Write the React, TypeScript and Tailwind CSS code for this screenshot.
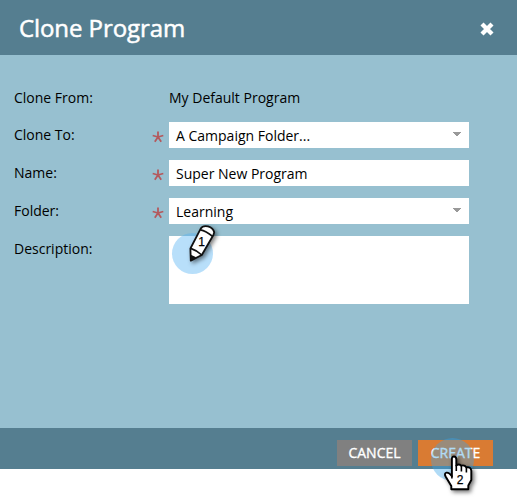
import type { ReactNode } from "react";

function Label({ children }: { children: ReactNode }) {
  return <div className="w-[137px] shrink-0 pt-[3px] leading-5">{children}</div>;
}

function Required() {
  return (
    <svg className="mt-[9px] mr-[5px] ml-px h-3 w-3 shrink-0" viewBox="0 0 12 12" aria-hidden="true">
      <path d="M6 6V.5M6 6 .7 4.5M6 6l5.3-1.5M6 6l-3.2 4.8M6 6l3.2 4.8" stroke="#b4595d" strokeWidth="1.8" fill="none" />
    </svg>
  );
}

function Field({ label, value, select }: { label: string; value: string; select?: boolean }) {
  return (
    <div className="flex h-[26px]">
      <Label>{label}</Label>
      <div className="flex w-[18px] shrink-0">
        <Required />
      </div>
      <div className="flex w-[300px] items-center justify-between bg-white pr-2 pl-[7px]">
        <span className="pt-px leading-5">{value}</span>
        {select && (
          <svg className="mb-0.5 h-1 w-2" viewBox="0 0 8 4" shapeRendering="crispEdges" aria-hidden="true">
            <path d="M0 0h8v1H7v1H6v1H5v1H3V3H2V2H1V1H0z" fill="#999" />
          </svg>
        )}
      </div>
    </div>
  );
}

function PencilMarker() {
  return (
    <svg className="pointer-events-none absolute top-[220px] left-[168px]" width="56" height="60" viewBox="168 220 56 60">
      <circle cx="192.5" cy="253.5" r="20.5" fill="#55b2f4" fillOpacity=".42" />
      <g className="drop-shadow-[2px_2px_2px_rgba(0,0,0,0.5)]">
        <path d="M190.8 260.6 190.4 248.5 200.6 228.8Q202.7 225.2 208 226.4 213.2 228 214.2 232.2L213.4 235 201.8 255Z" fill="#fff" stroke="#111" strokeWidth="1.8" strokeLinejoin="round" />
        <path d="M200.3 229.9Q206 231 212.6 236.3M190.7 248.4Q197 250.5 201.8 255" fill="none" stroke="#111" strokeWidth="1.7" />
        <path d="m190.2 254.5 6 2.8-5.8 4z" fill="#111" />
      </g>
      <text x="198.2" y="246" fontSize="12" fontFamily="Liberation Sans, Arial, sans-serif" fill="#000" stroke="#000" strokeWidth=".25">1</text>
    </svg>
  );
}

function HandMarker() {
  return (
    <svg className="pointer-events-none absolute top-[434px] left-[427px]" width="56" height="64" viewBox="427 434 56 64">
      <circle cx="452.5" cy="459.5" r="21.5" fill="#39a5e8" fillOpacity=".4" />
      <g className="drop-shadow-[2px_2px_2px_rgba(0,0,0,0.55)]">
        <path d="M451.3 489.3V486L445.6 476.5Q443.9 473.2 446.6 472.6 449 472.3 451.9 476.2V459.2Q451.8 456.5 454 456.5T456.3 459.2V465.5Q458.8 463.5 461.3 465.7 464.4 464.6 466.4 467.4 470.6 466.6 471.3 470.6V480L468.3 485.5V489.3Z" fill="#fff" stroke="#000" strokeWidth="1.9" strokeLinejoin="round" />
        <path d="M456.3 465v6M461.4 466v5.5M466.4 467.4v5.2M451.9 475.5v3" stroke="#000" strokeWidth="1.6" fill="none" />
      </g>
      <text x="456.7" y="484" fontSize="12" fontFamily="Liberation Sans, Arial, sans-serif" fill="#000" stroke="#000" strokeWidth=".25">2</text>
    </svg>
  );
}

export default function App() {
  return (
    <div className="relative h-[502px] w-[517px] overflow-hidden bg-white font-['Open_Sans','Noto_Sans',sans-serif] text-sm text-black">
      <header className="flex h-[55px] items-center justify-between bg-[#557e90] pr-[22px] pl-[19px] text-white">
        <h1 className="text-2xl leading-8 tracking-[-0.08px] [-webkit-text-stroke:0.5px_white]">Clone Program</h1>
        <button type="button" aria-label="Close" className="mt-[3px]">
          <svg width="16" height="16" viewBox="0 0 16 16">
            <path d="m3 3 10 10M13 3 3 13" stroke="white" strokeWidth="4.3" />
          </svg>
        </button>
      </header>
      <main className="flex h-[373px] flex-col gap-3 bg-[#97c0d0] pt-[30px] pl-3.5">
        <div className="flex h-[25px]">
          <Label>Clone From:</Label>
          <span className="ml-[18px] pt-[3px] leading-5">My Default Program</span>
        </div>
        <Field label="Clone To:" value="A Campaign Folder..." select />
        <Field label="Name:" value="Super New Program" />
        <Field label="Folder:" value="Learning" select />
        <div className="flex h-[68px]">
          <Label>Description:</Label>
          <div className="ml-[18px] w-[300px] bg-white" />
        </div>
      </main>
      <footer className="flex h-[41px] justify-end gap-1.5 bg-[#557e90] pt-3 pr-6 text-white [-webkit-text-stroke:0.35px_white]">
        <button type="button" className="h-[26px] w-[75px] bg-[#808080]">CANCEL</button>
        <button type="button" className="h-[26px] w-[75px] bg-[#d97b33]">CREATE</button>
      </footer>
      <PencilMarker />
      <HandMarker />
    </div>
  );
}
